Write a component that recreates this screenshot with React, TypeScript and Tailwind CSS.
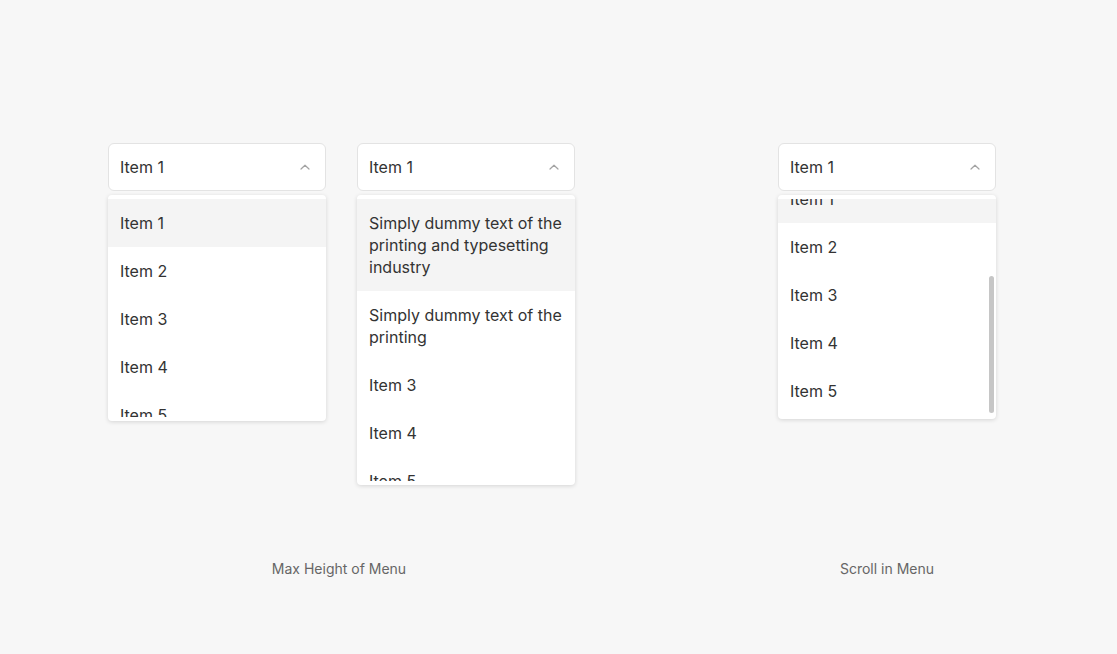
import React from "react";

const Chevron = () => (
  <svg width="10" height="6" viewBox="0 0 10 6" fill="none">
    <path d="M1 5L5 1.2L9 5" stroke="#a3a3a3" strokeWidth="1.2" strokeLinecap="round" strokeLinejoin="round" />
  </svg>
);

const SelectBox = () => (
  <div className="flex h-[48px] w-[218px] items-center justify-between rounded-[6px] border border-[#e3e3e3] bg-white pl-[11px] pr-[15px] text-[16px] text-[#333]">
    <span>Item 1</span>
    <Chevron />
  </div>
);

const Item = ({ children, active }: { children: React.ReactNode; active?: boolean }) => (
  <div className={`px-[12px] py-[13px] text-[16px] leading-[22px] text-[#333] ${active ? "bg-[#f4f4f4]" : "bg-white"}`}>
    {children}
  </div>
);

export default function App() {
  return (
    <div className="min-h-[654px] w-full bg-[#f7f7f7] font-['Inter','Liberation_Sans',sans-serif]">
      <div className="flex pl-[108px] pt-[143px]">
        <div className="flex w-[467px] flex-col">
          <div className="flex h-[416px] items-start gap-[31px]">
            <div className="flex flex-col gap-[4px]">
              <SelectBox />
              <div className="w-[218px] overflow-hidden rounded-[4px] bg-white py-[4px] shadow-[0_1px_4px_rgba(0,0,0,0.14)]">
                <div className="h-[218px] overflow-hidden">
                  <Item active>Item 1</Item>
                  <Item>Item 2</Item>
                  <Item>Item 3</Item>
                  <Item>Item 4</Item>
                  <Item>Item 5</Item>
                </div>
              </div>
            </div>
            <div className="flex flex-col gap-[4px]">
              <SelectBox />
              <div className="w-[218px] overflow-hidden rounded-[4px] bg-white py-[4px] shadow-[0_1px_4px_rgba(0,0,0,0.14)]">
                <div className="h-[282px] overflow-hidden">
                  <Item active>Simply dummy text of the printing and typesetting industry</Item>
                  <Item>Simply dummy text of the printing</Item>
                  <Item>Item 3</Item>
                  <Item>Item 4</Item>
                  <Item>Item 5</Item>
                </div>
              </div>
            </div>
          </div>
          <div className="pr-[5px] text-center text-[14px] leading-[20px] text-[#666]">Max Height of Menu</div>
        </div>
        <div className="ml-[203px] flex w-[218px] flex-col">
          <div className="flex h-[416px] flex-col gap-[4px]">
            <SelectBox />
            <div className="relative w-[218px] overflow-hidden rounded-[4px] bg-white pb-[4px] pt-[4px] shadow-[0_1px_4px_rgba(0,0,0,0.14)]">
              <div className="h-[216px] overflow-hidden">
                <div className="-mt-[24px]">
                  <Item active>Item 1</Item>
                  <Item>Item 2</Item>
                  <Item>Item 3</Item>
                  <Item>Item 4</Item>
                  <Item>Item 5</Item>
                </div>
              </div>
              <div className="absolute right-[2px] top-[81px] h-[137px] w-[5px] rounded-full bg-[#c6c6c6]" />
            </div>
          </div>
          <div className="text-center text-[14px] leading-[20px] text-[#666]">Scroll in Menu</div>
        </div>
      </div>
    </div>
  );
}
